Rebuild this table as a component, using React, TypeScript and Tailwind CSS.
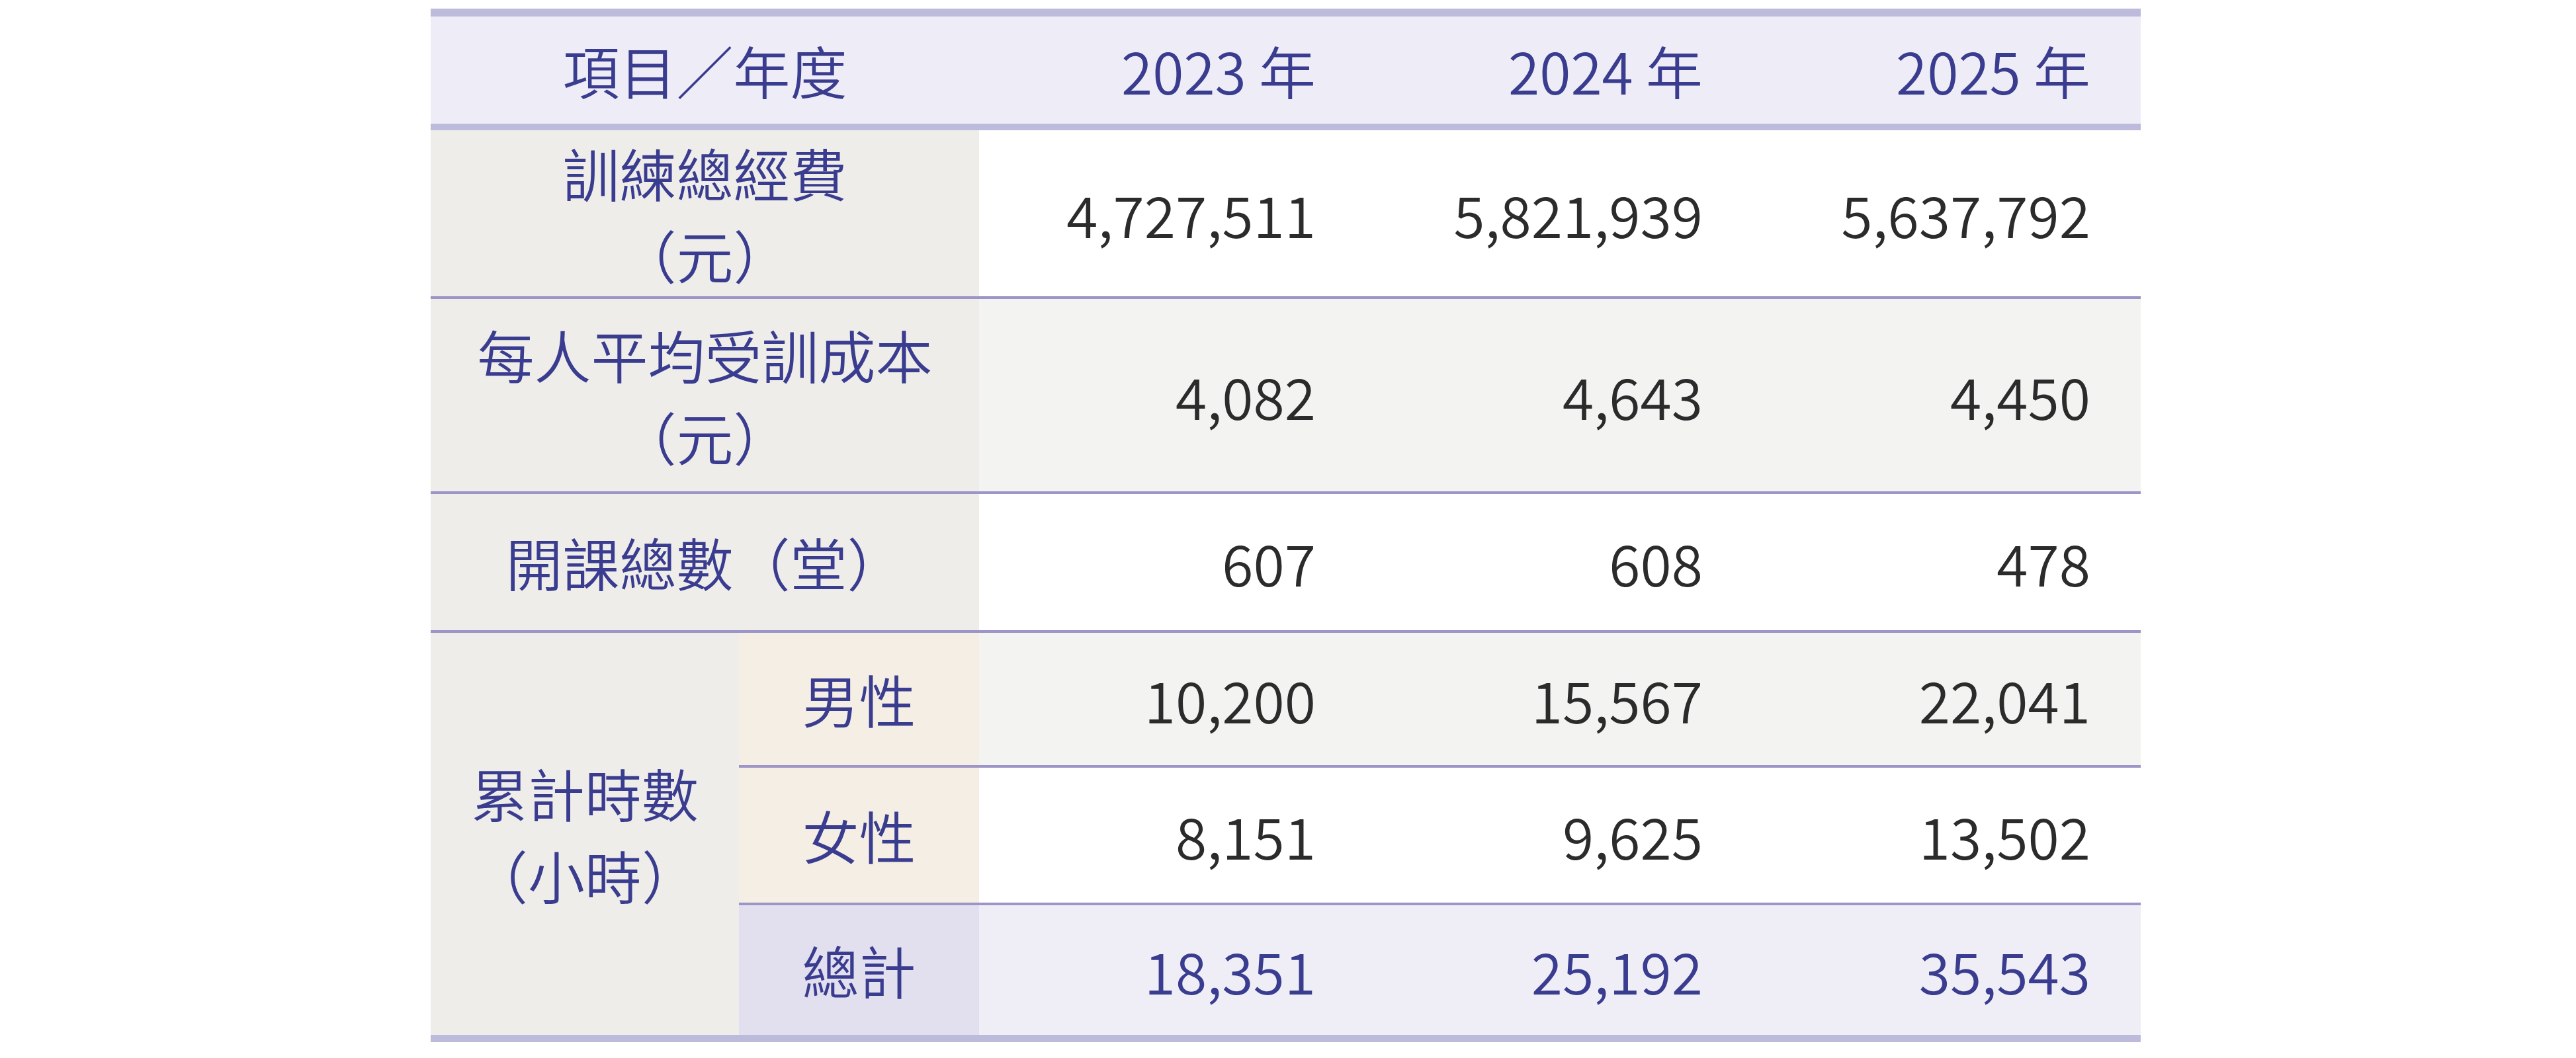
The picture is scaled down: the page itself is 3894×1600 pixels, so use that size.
const years = ["2023 年", "2024 年", "2025 年"];

const rows = [
  { key: "cost", values: ["4,727,511", "5,821,939", "5,637,792"] },
  { key: "avg", values: ["4,082", "4,643", "4,450"] },
  { key: "courses", values: ["607", "608", "478"] },
  { key: "male", values: ["10,200", "15,567", "22,041"] },
  { key: "female", values: ["8,151", "9,625", "13,502"] },
  { key: "total", values: ["18,351", "25,192", "35,543"] },
];

const Values = ({ values, className }: { values: string[]; className: string }) => (
  <>
    {values.map((v, i) => (
      <div key={i} className={`flex items-center justify-end pr-[76px] ${className}`}>
        {v}
      </div>
    ))}
  </>
);

const App = () => {
  return (
    <div className="min-h-[1600px] w-[3894px] bg-white pt-[13px] font-['Noto_Sans_CJK_TC','Noto_Sans',sans-serif] text-[86px] leading-[1.44] font-[350]">
      <div className="ml-[651px] w-[2585px] border-t-[12px] border-b-[11px] border-[#bdbbdc]">
        {/* header */}
        <div className="grid h-[172px] grid-cols-[829px_585px_585px_586px] border-b-[10px] border-[#bdbbdc] bg-[#eeedf7] text-[#3a3d8f]">
          <div className="flex items-center justify-center">項目／年度</div>
          {years.map((y) => (
            <div key={y} className="flex items-center justify-end pr-[76px]">
              {y}
            </div>
          ))}
        </div>

        <div className="grid grid-cols-[466px_363px_585px_585px_586px] grid-rows-[251px_295px_210px_204px_208px_200px] text-[#2b2b2b]">
          {/* 訓練總經費 */}
          <div className="col-span-2 flex flex-col items-center justify-center bg-[#efedea] text-[#3a3d8f]">
            <span>訓練總經費</span>
            <span>（元）</span>
          </div>
          <Values values={rows[0].values} className="bg-white" />

          {/* 每人平均受訓成本 */}
          <div className="col-span-2 flex flex-col items-center justify-center border-t-4 border-[#9d94c7] bg-[#efedea] text-[#3a3d8f]">
            <span>每人平均受訓成本</span>
            <span>（元）</span>
          </div>
          <Values values={rows[1].values} className="border-t-4 border-[#9d94c7] bg-[#f3f3f2]" />

          {/* 開課總數 */}
          <div className="col-span-2 flex items-center justify-center border-t-4 border-[#9d94c7] bg-[#efedea] text-[#3a3d8f]">
            開課總數（堂）
          </div>
          <Values values={rows[2].values} className="border-t-4 border-[#9d94c7] bg-white" />

          {/* 累計時數 */}
          <div className="row-span-3 flex flex-col items-center justify-center border-t-4 border-[#9d94c7] bg-[#efedea] text-[#3a3d8f]">
            <span>累計時數</span>
            <span>（小時）</span>
          </div>
          <div className="flex items-center justify-center border-t-4 border-[#9d94c7] bg-[#f5eee4] text-[#3a3d8f]">男性</div>
          <Values values={rows[3].values} className="border-t-4 border-[#9d94c7] bg-[#f3f3f2]" />

          <div className="flex items-center justify-center border-t-4 border-[#9d94c7] bg-[#f5eee4] text-[#3a3d8f]">女性</div>
          <Values values={rows[4].values} className="border-t-4 border-[#9d94c7] bg-white" />

          <div className="flex items-center justify-center border-t-4 border-[#9d94c7] bg-[#e2e0ef] text-[#3a3d8f]">總計</div>
          <Values values={rows[5].values} className="border-t-4 border-[#9d94c7] bg-[#efeef7] text-[#3a3d8f]" />
        </div>
      </div>
    </div>
  );
};

export default App;
